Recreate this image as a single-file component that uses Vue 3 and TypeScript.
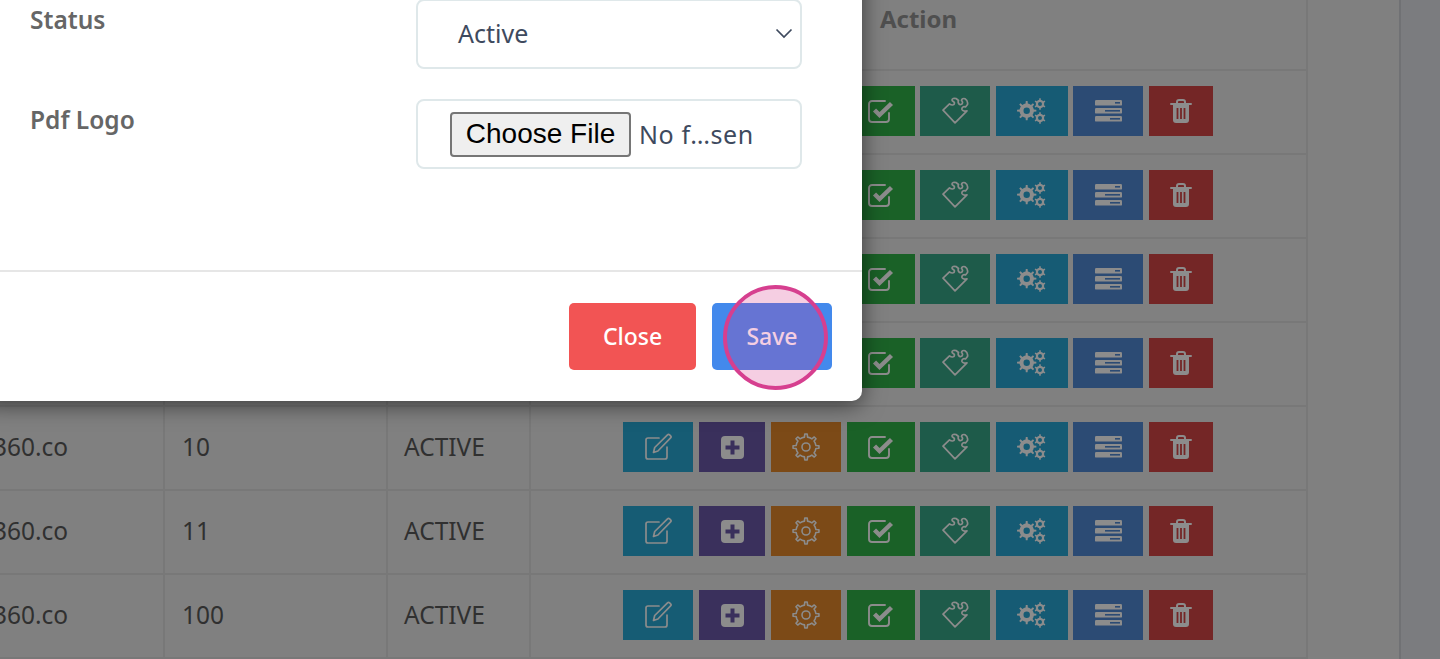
<template>
  <div class="page">
    <div class="content">
      <div class="table">
        <div class="row head">
          <div class="cell"></div>
          <div class="cell"></div>
          <div class="cell"></div>
          <div class="cell action-head">Action</div>
        </div>
        <div v-for="(r, i) in rows" :key="i" class="row">
          <div class="cell first">{{ r.mail }}</div>
          <div class="cell second">{{ r.num }}</div>
          <div class="cell third">{{ r.status }}</div>
          <div class="cell actions">
            <button class="act edit">
              <svg width="28" height="28" viewBox="0 0 28 28" fill="none" stroke="currentColor" stroke-width="1.700" stroke-linejoin="round" stroke-linecap="round">
                <path d="M15 5H4a2 2 0 0 0-2 2v17a2 2 0 0 0 2 2h17a2 2 0 0 0 2-2V14" />
                <path d="M9.500 19.500l1.200-5L23.500 1.800a1.500 1.500 0 0 1 2.100 0l1 1a1.500 1.500 0 0 1 0 2.100L13.900 18z" />
              </svg>
            </button>
            <button class="act plus">
              <svg width="23" height="23" viewBox="0 0 23 23">
                <rect width="23" height="23" rx="4" fill="currentColor" />
                <path d="M11.500 4.500v14M4.500 11.500h14" stroke="#3a305c" stroke-width="4" />
              </svg>
            </button>
            <button class="act cog">
              <svg width="28" height="28" viewBox="0 0 28 28" fill="none" stroke="currentColor" stroke-width="1.600" stroke-linejoin="round">
                <path :d="gearOutline" />
                <circle cx="14" cy="14" r="4" />
              </svg>
            </button>
            <button class="act check">
              <svg width="26" height="24" viewBox="0 0 26 24" fill="none" stroke="currentColor" stroke-linejoin="round" stroke-linecap="round">
                <path d="M17 2H4a3 3 0 0 0-3 3v15a3 3 0 0 0 3 3h14a3 3 0 0 0 3-3v-6" stroke-width="1.900" />
                <path d="M6.500 11l5 5L23.500 4.500" stroke-width="4.400" stroke-linecap="butt" stroke-linejoin="miter" />
              </svg>
            </button>
            <button class="act puzzle">
              <svg width="28" height="28" viewBox="0 0 28 28" fill="none" stroke="currentColor" stroke-width="1.700" stroke-linejoin="round">
                <path d="M2 13.200L8.500 6.800C10.500 8.500 13.500 8.500 13.500 6 13.500 4.500 11 4.500 11 3 11 1.500 13 1 15 1.500L17.500 3.500C16.500 5.500 18 8 20 7.500 22 7 22 4.500 20.500 3.500 20.500 2 22.500 1 24 1.800 26 3 27 5 26.500 7.500L24.500 10C22.500 9 20.500 10.500 21 12.500 21.500 14 24 14.500 26 13.800L14 25.800z" />
              </svg>
            </button>
            <button class="act cogs">
              <svg width="30" height="28" viewBox="0 0 30 28" fill="currentColor">
                <path :d="gearBig" fill-rule="evenodd" />
                <path :d="gearTop" fill-rule="evenodd" />
                <path :d="gearBottom" fill-rule="evenodd" />
              </svg>
            </button>
            <button class="act server">
              <svg width="27" height="22" viewBox="0 0 27 22">
                <g v-for="s in slots" :key="s.y">
                  <rect x="0" :y="s.y" width="27" height="5.600" rx="1.200" fill="currentColor" />
                  <rect :x="25 - s.w" :y="s.y + 2" :width="s.w" height="1.600" fill="#2c4b74" />
                </g>
              </svg>
            </button>
            <button class="act trash">
              <svg width="22" height="24" viewBox="0 0 22 24">
                <path d="M1 5h20M7 4.500V3a2 2 0 0 1 2-2h4a2 2 0 0 1 2 2v1.500" fill="none" stroke="currentColor" stroke-width="2" stroke-linecap="round" />
                <path d="M3 6h16v15a3 3 0 0 1-3 3H6a3 3 0 0 1-3-3z" fill="currentColor" />
                <path d="M7.500 9v11M11 9v11M14.500 9v11" stroke="#742626" stroke-width="1.800" />
              </svg>
            </button>
          </div>
        </div>
      </div>
      <div class="right-pad"></div>
      <div class="side"></div>
    </div>

    <div class="modal">
      <div class="modal-body">
        <div class="form-row">
          <label>Status</label>
          <div class="control select">
            <span>Active</span>
            <svg class="chevron" width="18" height="11" viewBox="0 0 18 11" fill="none" stroke="#3e4a5e" stroke-width="1.700">
              <path d="M1.500 1.500L9 9l7.500-7.500" />
            </svg>
          </div>
        </div>
        <div class="form-row">
          <label>Pdf Logo</label>
          <div class="control file">
            <span class="choose">Choose File</span>
            <span class="file-name">No f…sen</span>
          </div>
        </div>
      </div>
      <div class="modal-footer">
        <button class="btn close">Close</button>
        <button class="btn save">Save</button>
      </div>
    </div>

    <div class="spot"></div>
  </div>
</template>

<script setup lang="ts">
interface Row {
  mail: string
  num: string
  status: string
}

// the first four rows sit behind the modal, nothing of their text shows
const rows: Row[] = [
  { mail: '', num: '', status: '' },
  { mail: '', num: '', status: '' },
  { mail: '', num: '', status: '' },
  { mail: '', num: '', status: '' },
  { mail: '360.co', num: '10', status: 'ACTIVE' },
  { mail: '360.co', num: '11', status: 'ACTIVE' },
  { mail: '360.co', num: '100', status: 'ACTIVE' },
]

const slots = [
  { y: 0, w: 5 },
  { y: 8, w: 15 },
  { y: 16, w: 10 },
]

// toothed outline, with an optional round hole for the solid ones
function gear(cx: number, cy: number, outer: number, inner: number, teeth: number, hole = 0): string {
  const step = (Math.PI * 2) / teeth
  const pts: string[] = []
  for (let t = 0; t < teeth; t++) {
    const a = t * step - Math.PI / 2
    const list: [number, number][] = [
      [a - step * 0.5, inner],
      [a - step * 0.2, inner],
      [a - step * 0.12, outer],
      [a + step * 0.12, outer],
      [a + step * 0.2, inner],
    ]
    for (const [ang, r] of list) {
      pts.push(`${(cx + Math.cos(ang) * r).toFixed(2)} ${(cy + Math.sin(ang) * r).toFixed(2)}`)
    }
  }
  let d = `M${pts.join('L')}Z`
  if (hole) {
    d += `M${cx - hole} ${cy}a${hole} ${hole} 0 1 0 ${hole * 2} 0a${hole} ${hole} 0 1 0 ${-hole * 2} 0Z`
  }
  return d
}

const gearOutline = gear(14, 14, 13, 10, 8)
const gearBig = gear(9.700, 13.700, 9.700, 7.200, 8, 3.200)
const gearTop = gear(23, 7, 5.800, 4.200, 6, 2)
const gearBottom = gear(23, 21, 5.800, 4.200, 6, 2)
</script>

<style>
html,
body {
  margin: 0;
  background: #808080;
}
</style>

<style scoped>
.page {
  position: relative;
  width: 1440px;
  height: 659px;
  overflow: hidden;
  background: #808080;
  font-family: "Noto Sans", sans-serif;
}

.content {
  display: flex;
  margin-top: -31px;
  margin-left: -21px;
  height: 690px;
}

.table {
  width: 1329px;
  flex: none;
  color: #303030;
  font-size: 24.500px;
}

.row {
  display: grid;
  grid-template-columns: 186px 223px 143px 777px;
  height: 84px;
  box-sizing: border-box;
  border-bottom: 2px solid #787878;
}

.row.head {
  height: 102px;
}

.cell {
  display: flex;
  align-items: center;
  padding: 0 18px 4px;
  border-right: 2px solid #787878;
  box-sizing: border-box;
  min-width: 0;
}

.first {
  padding-left: 14px;
}

.second {
  padding-left: 17px;
}

.third {
  padding-left: 16px;
}

.action-head {
  justify-content: center;
  padding-bottom: 2px;
  font-size: 24px;
  font-weight: 700;
  color: #4f4f4f;
}

.actions {
  justify-content: center;
  gap: 6px;
  padding: 0 1px 2px 0;
}

.act {
  display: flex;
  align-items: center;
  justify-content: center;
  height: 50px;
  padding: 0;
  border: none;
  color: #8c8c8c;
}

.edit { width: 70px; background: #165c74; }
.plus { width: 66px; background: #3a305c; }
.cog { width: 70px; background: #7c4a17; }
.check { width: 68px; margin-right: -1px; background: #1a6127; }
.puzzle { width: 70px; background: #1e5b4a; }
.cogs { width: 72px; margin-right: -1px; background: #165b74; }
.server { width: 70px; background: #2c4b74; }
.trash { width: 64px; background: #742626; }

.right-pad {
  width: 91px;
  flex: none;
  border-right: 2px solid #707174;
}

.side {
  flex: 1;
  background: #7b7c7f;
}

.modal {
  position: absolute;
  top: -40px;
  left: -20px;
  width: 882px;
  height: 441px;
  display: flex;
  flex-direction: column;
  background: #fff;
  border-radius: 10px;
  box-shadow: 0 4px 22px rgba(0, 0, 0, 0.55);
}

.modal-body {
  flex: 1;
  padding: 39px 60px 0 50px;
  display: flex;
  flex-direction: column;
  gap: 30px;
}

.form-row {
  display: flex;
  justify-content: space-between;
}

.form-row label {
  padding-top: 3px;
  font-size: 24.500px;
  font-weight: 600;
  line-height: 36px;
  color: #666;
}

.control {
  display: flex;
  align-items: center;
  box-sizing: border-box;
  width: 386px;
  height: 70px;
  border: 2px solid #dfe8ea;
  border-radius: 8px;
  font-size: 25px;
  color: #3e4a5e;
}

.select {
  padding: 0 7px 2px 40px;
  justify-content: space-between;
}

.file {
  padding-left: 32px;
  gap: 8px;
}

.file-name {
  letter-spacing: 0.6px;
}

.choose {
  box-sizing: border-box;
  height: 45px;
  width: 181px;
  display: flex;
  align-items: center;
  justify-content: center;
  background: #efefef;
  border: 2px solid #767676;
  border-radius: 4px;
  font-family: "Liberation Sans", sans-serif;
  font-size: 28px;
  color: #000;
}

.modal-footer {
  display: flex;
  justify-content: flex-end;
  gap: 16px;
  padding: 31px 30px;
  border-top: 2px solid #e6e6e6;
}

.btn {
  height: 67px;
  padding: 0 0 1px;
  border: none;
  border-radius: 5px;
  color: #fff;
  font-family: "Noto Sans", sans-serif;
  font-size: 23px;
  font-weight: 500;
}

.close {
  width: 127px;
  background: #f25454;
}

.save {
  width: 120px;
  background: #4389ec;
}

.spot {
  position: absolute;
  left: 723px;
  top: 285px;
  width: 105px;
  height: 105px;
  box-sizing: border-box;
  border: 4px solid #d63f8f;
  border-radius: 50%;
  background: rgba(214, 51, 132, 0.24);
}
</style>
